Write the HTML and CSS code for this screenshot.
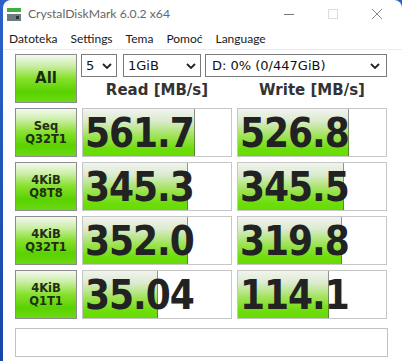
FILE: index.html
```html
<!DOCTYPE html>
<html lang="hr">
<head>
    <meta charset="UTF-8" />
    <title>CrystalDiskMark 6.0.2 x64</title>
    <link rel="stylesheet" href="styles.css">
</head>
<body>
    <div class="window">
        <div class="titlebar">
            <svg class="app-icon" width="14" height="13" viewBox="0 0 14 13">
                <rect x="0" y="0" width="14" height="4" fill="#3cb043"/>
                <rect x="0" y="6" width="14" height="7" fill="#6f7a80"/>
                <rect x="9" y="8" width="3" height="3" fill="#2b3236"/>
            </svg>
            <span class="title">CrystalDiskMark 6.0.2 x64</span>
            <div class="win-controls">
                <svg width="12" height="12" viewBox="0 0 12 12"><path d="M1 6.5h10" stroke="#777" stroke-width="1"/></svg>
                <svg width="12" height="12" viewBox="0 0 12 12"><rect x="1.5" y="1.5" width="9" height="9" fill="none" stroke="#ddd" stroke-width="1"/></svg>
                <svg width="12" height="12" viewBox="0 0 12 12"><path d="M1 1l10 10M11 1L1 11" stroke="#888" stroke-width="1"/></svg>
            </div>
        </div>
        <div class="menubar">
            <span>Datoteka</span>
            <span>Settings</span>
            <span>Tema</span>
            <span>Pomoć</span>
            <span>Language</span>
        </div>
        <div class="main">
            <div class="grid">
                <div class="test all">All</div>
                <div class="top">
                    <div class="selects">
                        <div class="select count">5<svg viewBox="0 0 10 6"><path d="M1 1l4 4 4-4" fill="none" stroke="#222" stroke-width="1.8"/></svg></div>
                        <div class="select size">1GiB<svg viewBox="0 0 10 6"><path d="M1 1l4 4 4-4" fill="none" stroke="#222" stroke-width="1.8"/></svg></div>
                        <div class="select drive">D: 0% (0/447GiB)<svg viewBox="0 0 10 6"><path d="M1 1l4 4 4-4" fill="none" stroke="#222" stroke-width="1.8"/></svg></div>
                    </div>
                    <div class="heads">
                        <div>Read [MB/s]</div>
                        <div>Write [MB/s]</div>
                    </div>
                </div>

                <div class="test">Seq<br>Q32T1</div>
                <div class="value"><div class="bar" style="width: 74.7%"></div><span>561.7</span></div>
                <div class="value"><div class="bar" style="width: 74%"></div><span>526.8</span></div>

                <div class="test">4KiB<br>Q8T8</div>
                <div class="value"><div class="bar" style="width: 70%"></div><span>345.3</span></div>
                <div class="value"><div class="bar" style="width: 70.7%"></div><span>345.5</span></div>

                <div class="test">4KiB<br>Q32T1</div>
                <div class="value"><div class="bar" style="width: 70.5%"></div><span>352.0</span></div>
                <div class="value"><div class="bar" style="width: 69.7%"></div><span>319.8</span></div>

                <div class="test">4KiB<br>Q1T1</div>
                <div class="value"><div class="bar" style="width: 50%"></div><span>35.04</span></div>
                <div class="value"><div class="bar" style="width: 60.7%"></div><span>114.1</span></div>
            </div>
            <div class="status"></div>
        </div>
    </div>
</body>
</html>
```

FILE: styles.css
```css
body {
    margin: 0;
    padding: 0;
    height: 361px;
    overflow: hidden;
    background: linear-gradient(to bottom, #2a62c9, #1846a8);
    font-family: "DejaVu Sans", sans-serif;
}

.window {
    margin-left: 3px;
    height: 361px;
    background-color: #ffffff;
    border-radius: 8px 8px 0 0;
}

.titlebar {
    height: 27px;
    display: flex;
    align-items: center;
    padding-left: 4px;
}

.app-icon {
    margin-top: 1px;
}

.title {
    margin-left: 7px;
    font-family: Lato, sans-serif;
    font-size: 12.2px;
    color: #666;
}

.win-controls {
    margin-left: auto;
    display: flex;
    gap: 32px;
    padding-right: 19px;
}

.menubar {
    height: 22px;
    display: flex;
    align-items: center;
    gap: 13px;
    padding-left: 6px;
    border-bottom: 1px solid #ececec;
    font-family: Lato, sans-serif;
    font-size: 12px;
    color: #1a1a1a;
}

.main {
    padding: 4px 0 0 12px;
}

.grid {
    display: grid;
    grid-template-columns: 62px 150px 150px;
    grid-auto-rows: 49px;
    column-gap: 5px;
    row-gap: 5px;
}

.test {
    box-sizing: border-box;
    border: 1px solid #8c8c8c;
    background: linear-gradient(to bottom, #f3f9ef 0%, #cdeeaa 22%, #86e02c 50%, #5ad200 78%, #6cd914 100%);
    display: flex;
    align-items: center;
    justify-content: center;
    text-align: center;
    font-weight: bold;
    font-size: 11.5px;
    line-height: 13px;
    color: #1f2e14;
}

.test.all {
    font-size: 15px;
    color: #1c2a10;
}

.top {
    grid-column: 2 / 4;
    display: flex;
    flex-direction: column;
}

.selects {
    display: flex;
    gap: 6px;
    height: 23px;
    margin-left: -1px;
}

.select {
    box-sizing: border-box;
    height: 23px;
    border: 1px solid #7a7a7a;
    display: flex;
    align-items: center;
    padding-left: 4px;
    padding-right: 4px;
    font-size: 13px;
    color: #111;
}

.select svg {
    width: 10px;
    height: 6px;
    margin-left: auto;
}

.select.count {
    width: 36px;
}

.select.size {
    width: 78px;
}

.select.drive {
    flex: 1;
    margin-left: -2px;
    padding-left: 6px;
    padding-right: 6px;
}

.heads {
    flex: 1;
    display: grid;
    grid-template-columns: 150px 150px;
    column-gap: 5px;
    align-items: center;
    text-align: center;
    font-weight: bold;
    font-size: 15px;
    color: #333;
}

.value {
    position: relative;
    box-sizing: border-box;
    border: 1px solid #c6c6c6;
    background-color: #ffffff;
    display: flex;
    align-items: center;
    padding-left: 2px;
}

.bar {
    position: absolute;
    left: 0;
    top: 0;
    bottom: 0;
    background: linear-gradient(to bottom, #f1f3ef 0%, #dcebd0 25%, #9ee354 58%, #6edd0c 85%, #66dc00 100%);
    border-right: 1px solid rgba(70, 70, 70, 0.55);
}

.value span {
    position: relative;
    font-family: "DejaVu Sans Condensed", "DejaVu Sans", sans-serif;
    font-weight: bold;
    font-size: 40px;
    letter-spacing: -1px;
    color: #222;
}

.status {
    box-sizing: border-box;
    margin-top: 9px;
    width: 373px;
    height: 29px;
    border: 1px solid #c0c0c0;
    background-color: #ffffff;
}
```
